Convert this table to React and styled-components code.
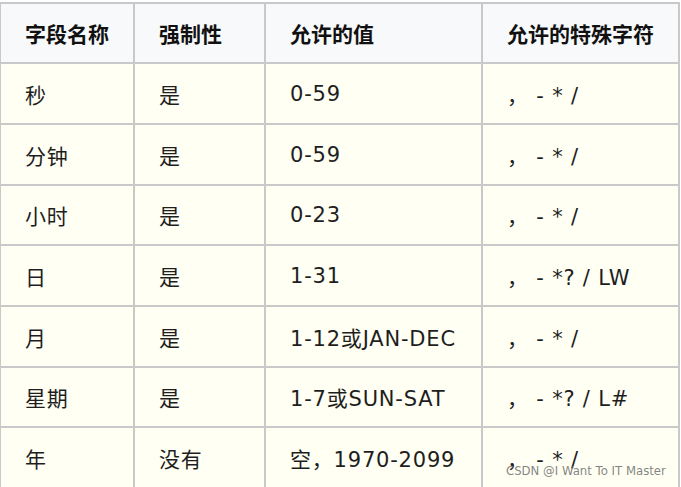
import React from 'react';
import styled, { createGlobalStyle } from 'styled-components';

const GlobalStyle = createGlobalStyle`
  html, body {
    margin: 0;
    padding: 0;
    background: #ffffff;
  }
  body {
    font-family: "DejaVu Sans", "Noto Sans CJK SC", sans-serif;
    overflow: hidden;
  }
`;

const Page = styled.div`
  position: relative;
  width: 681px;
  height: 487px;
  overflow: hidden;
  padding-top: 2px;
  box-sizing: border-box;
`;

const Table = styled.table`
  border-collapse: collapse;
  table-layout: fixed;
  width: 679px;
  margin-left: -1px;
`;

const HeadCell = styled.th`
  height: 58px;
  padding: 0 0 0 24px;
  text-align: left;
  font-size: 21px;
  font-weight: bold;
  color: #111;
  background: #f8f9fb;
  border: 2px solid #c9c9c9;
`;

const Cell = styled.td`
  height: ${(p) => (p.$short ? '58px' : '59px')};
  padding: 0 0 0 24px;
  font-size: 21px;
  letter-spacing: 0.8px;
  color: #1e1e1e;
  background: #fffff3;
  border: 2px solid #c9c9c9;
  white-space: pre;
`;

const Watermark = styled.div`
  position: absolute;
  left: 506px;
  top: 464px;
  font-family: "DejaVu Sans", sans-serif;
  font-size: 11.7px;
  color: rgba(110, 110, 110, 0.85);
  white-space: nowrap;
`;

const cols = [134, 131, 217, 197];
const headers = ['字段名称', '强制性', '允许的值', '允许的特殊字符'];

const rows = [
  { cells: ['秒', '是', '0-59', '， - * /'] },
  { cells: ['分钟', '是', '0-59', '， - * /'] },
  { cells: ['小时', '是', '0-23', '， - * /'], short: true },
  { cells: ['日', '是', '1-31', '， - *? / LW'] },
  { cells: ['月', '是', '1-12或JAN-DEC', '， - * /'] },
  { cells: ['星期', '是', '1-7或SUN-SAT', '， - *? / L#'], short: true },
  { cells: ['年', '没有', '空，1970-2099', '， - * /'] },
];

export default function App() {
  return (
    <Page>
      <GlobalStyle />
      <Table>
        <colgroup>
          {cols.map((w, i) => (
            <col key={i} style={{ width: w }} />
          ))}
        </colgroup>
        <thead>
          <tr>
            {headers.map((h) => (
              <HeadCell key={h}>{h}</HeadCell>
            ))}
          </tr>
        </thead>
        <tbody>
          {rows.map((r, i) => (
            <tr key={i}>
              {r.cells.map((c, j) => (
                <Cell key={j} $short={r.short}>
                  {c}
                </Cell>
              ))}
            </tr>
          ))}
        </tbody>
      </Table>
      <Watermark>CSDN @I Want To IT Master</Watermark>
    </Page>
  );
}
